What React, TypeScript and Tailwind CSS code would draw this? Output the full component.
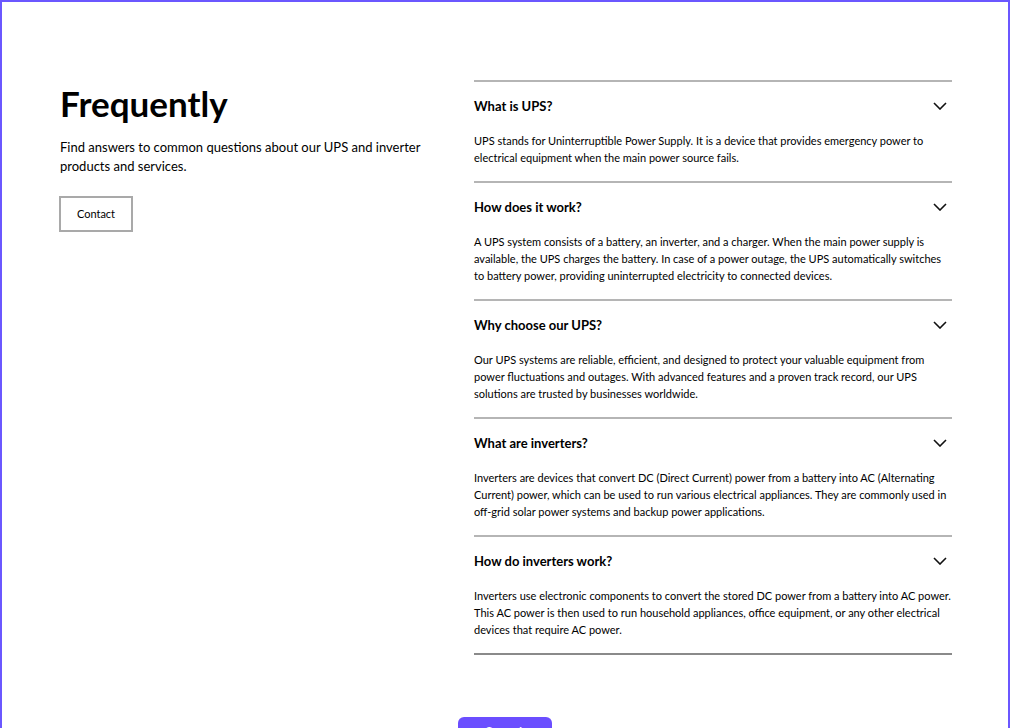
import React from "react";

const faqs = [
  {
    q: "What is UPS?",
    a: "UPS stands for Uninterruptible Power Supply. It is a device that provides emergency power to electrical equipment when the main power source fails.",
  },
  {
    q: "How does it work?",
    a: "A UPS system consists of a battery, an inverter, and a charger. When the main power supply is available, the UPS charges the battery. In case of a power outage, the UPS automatically switches to battery power, providing uninterrupted electricity to connected devices.",
  },
  {
    q: "Why choose our UPS?",
    a: "Our UPS systems are reliable, efficient, and designed to protect your valuable equipment from power fluctuations and outages. With advanced features and a proven track record, our UPS solutions are trusted by businesses worldwide.",
  },
  {
    q: "What are inverters?",
    a: "Inverters are devices that convert DC (Direct Current) power from a battery into AC (Alternating Current) power, which can be used to run various electrical appliances. They are commonly used in off-grid solar power systems and backup power applications.",
  },
  {
    q: "How do inverters work?",
    a: "Inverters use electronic components to convert the stored DC power from a battery into AC power. This AC power is then used to run household appliances, office equipment, or any other electrical devices that require AC power.",
  },
];

function Chevron() {
  return (
    <svg width="14" height="8" viewBox="0 0 14 8" className="mr-[5px]">
      <polyline points="1,1 7,7 13,1" fill="none" stroke="#111" strokeWidth="1.6" />
    </svg>
  );
}

export default function App() {
  return (
    <div
      className="w-[1010px] min-h-[800px] border-2 border-[#6b57ff] bg-white text-black"
      style={{ fontFamily: 'Lato, "Noto Sans", sans-serif' }}
    >
      <div className="flex pt-[78px] pl-[58px]">
        <div className="w-[414px] shrink-0">
          <h1 className="text-[35px] leading-[46px] font-bold">Frequently</h1>
          <p className="mt-[12px] text-[13px] leading-[19px] w-[370px]">
            Find answers to common questions about our UPS and inverter products and services.
          </p>
          <button className="mt-[20px] ml-[-1px] w-[74px] h-[36px] border-2 border-[#a9a9a9] text-[11px] bg-white">
            Contact
          </button>
        </div>
        <div className="w-[478px]">
          {faqs.map((f) => (
            <div key={f.q} className="border-t-2 border-[#b5b5b5]">
              <div className="flex items-center justify-between pt-[15px] pb-[13px]">
                <span className="text-[13px] leading-[18px] font-bold">{f.q}</span>
                <Chevron />
              </div>
              <p className="pt-[4px] pb-[15px] text-[11px] leading-[17px]">{f.a}</p>
            </div>
          ))}
          <div className="border-t-2 border-[#8a8a8a]" />
        </div>
      </div>
      <div className="flex justify-center mt-[62px]">
        <button className="w-[94px] pt-[5px] pb-[8px] leading-[20px] rounded-md bg-[#6b4eff] text-white text-[13px] font-medium">
          + Question
        </button>
      </div>
    </div>
  );
}
